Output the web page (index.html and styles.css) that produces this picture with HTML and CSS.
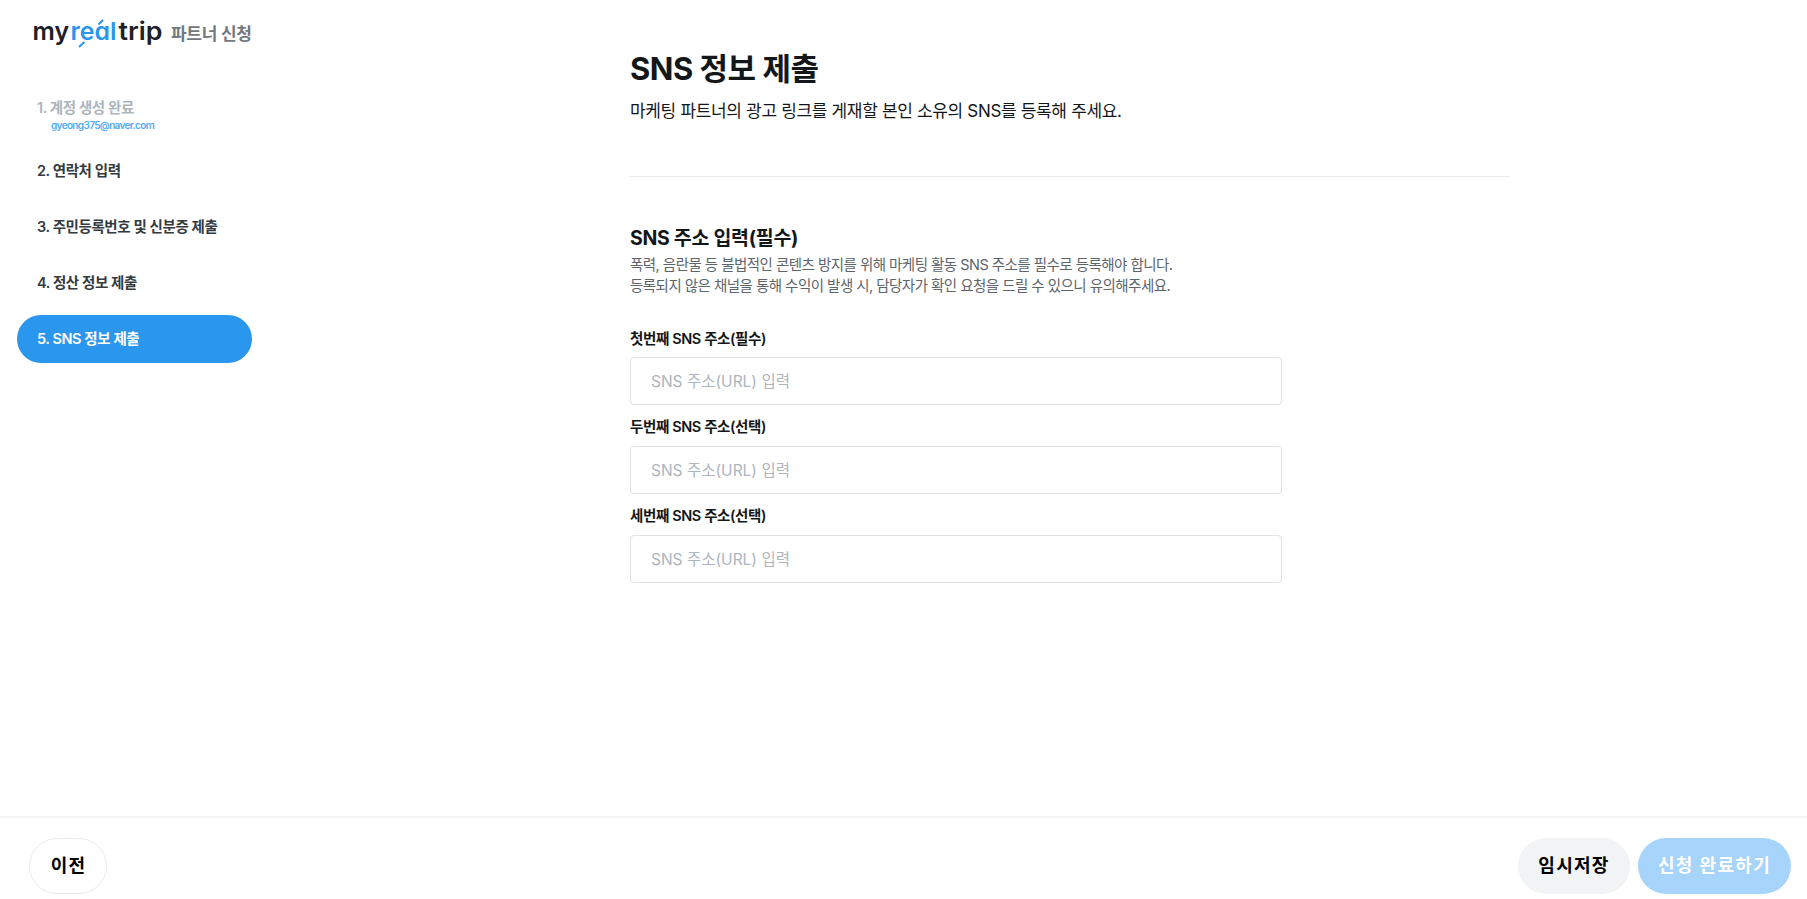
FILE: index.html
```
<!DOCTYPE html>
<html lang="ko">
<head>
  <meta charset="utf-8" />
  <link rel="stylesheet" href="styles.css">
  <title>마이리얼트립 파트너 신청</title>
</head>
<body>
  <div class="page">
    <aside class="sidebar">
      <header class="brand">
        <svg class="logo" width="130" height="34" viewBox="0 0 130 34" role="img" aria-label="myrealtrip">
          <text class="logo-dark" x="-0.5" y="22.5" textLength="36.5" lengthAdjust="spacingAndGlyphs">my</text>
          <text class="logo-blue" x="37.5" y="22.5" textLength="46" lengthAdjust="spacingAndGlyphs">real</text>
          <text class="logo-dark" x="85.5" y="22.5" textLength="44" lengthAdjust="spacingAndGlyphs">trip</text>
          <path class="logo-accent" d="M65.5 7.5 70 3M46 30 51.5 25" />
        </svg>
        <span class="brand-title">파트너 신청</span>
      </header>

      <ul class="steps">
        <li class="step done">1. 계정 생성 완료
          <span class="email">gyeong375@naver.com</span>
        </li>
        <li class="step">2. 연락처 입력</li>
        <li class="step">3. 주민등록번호 및 신분증 제출</li>
        <li class="step">4. 정산 정보 제출</li>
        <li class="step active">5. SNS 정보 제출</li>
      </ul>
    </aside>

    <main class="content">
      <h1>SNS 정보 제출</h1>
      <p class="lead">마케팅 파트너의 광고 링크를 게재할 본인 소유의 SNS를 등록해 주세요.</p>

      <section class="sns">
        <h2>SNS 주소 입력(필수)</h2>
        <p class="description">폭력, 음란물 등 불법적인 콘텐츠 방지를 위해 마케팅 활동 SNS 주소를 필수로 등록해야 합니다.<br>등록되지 않은 채널을 통해 수익이 발생 시, 담당자가 확인 요청을 드릴 수 있으니 유의해주세요.</p>

        <form class="fields">
          <label for="sns1">첫번째 SNS 주소(필수)</label>
          <input type="text" id="sns1" placeholder="SNS 주소(URL) 입력">
          <label for="sns2">두번째 SNS 주소(선택)</label>
          <input type="text" id="sns2" placeholder="SNS 주소(URL) 입력">
          <label for="sns3">세번째 SNS 주소(선택)</label>
          <input type="text" id="sns3" placeholder="SNS 주소(URL) 입력">
        </form>
      </section>
    </main>
  </div>

  <footer class="actions">
    <button type="button" class="btn-prev">이전</button>
    <button type="button" class="btn-save">임시저장</button>
    <button type="button" class="btn-submit" disabled>신청 완료하기</button>
  </footer>
</body>
</html>
```
FILE: styles.css
```
* {
  box-sizing: border-box;
}
body {
  margin: 0;
  height: 100vh;
  display: flex;
  flex-direction: column;
  overflow: hidden;
  background: #fff;
  color: #141719;
  font-family: Inter, "Noto Sans CJK KR", sans-serif;
}
h1, h2, p, ul {
  margin: 0;
  padding: 0;
}
.page {
  flex: 1;
  display: flex;
}
.sidebar {
  width: 252px;
  padding-left: 17px;
}
.brand {
  display: flex;
  align-items: center;
  height: 83px;
  padding: 0 0 15px 16px;
}
.logo {
  flex: none;
  overflow: visible;
}
.logo text {
  font-family: Inter, sans-serif;
  font-size: 24.5px;
  font-weight: 600;
  font-feature-settings: "cv11";
}
.logo-dark {
  fill: #1d2025;
}
.logo-blue {
  fill: #2b96ed;
}
.logo-accent {
  fill: none;
  stroke: #2b96ed;
  stroke-width: 2;
}
.brand-title {
  margin-left: 8px;
  padding-bottom: 4px;
  color: #717880;
  font-size: 17px;
  font-weight: 600;
  letter-spacing: -0.3px;
  white-space: nowrap;
}
.steps {
  list-style: none;
}
.step {
  height: 48px;
  margin-bottom: 8px;
  padding-left: 20px;
  border-radius: 24px;
  color: #343a40;
  font-size: 14.5px;
  font-weight: 600;
  line-height: 48px;
  letter-spacing: -0.42px;
  white-space: nowrap;
}
.step.done {
  height: 56px;
  padding-top: 15px;
  color: #adb5bd;
  line-height: 20px;
}
.email {
  display: block;
  padding-left: 14px;
  color: #51abf3;
  font-size: 10px;
  font-weight: 600;
  line-height: 15px;
  letter-spacing: -0.65px;
}
.step.active {
  background: #2b96ed;
  color: #fff;
}
.content {
  width: 880px;
  margin-left: 378px;
  padding-top: 45px;
}
h1 {
  font-size: 31px;
  font-weight: 700;
  line-height: 48px;
  letter-spacing: -0.5px;
}
.lead {
  margin-top: 4px;
  font-size: 17px;
  line-height: 28px;
  letter-spacing: -0.33px;
}
.sns {
  margin-top: 51px;
  padding-top: 46px;
  border-top: 1px solid #e9ecef;
}
h2 {
  margin-bottom: 1px;
  font-size: 19.5px;
  font-weight: 700;
  line-height: 30px;
  letter-spacing: -0.3px;
}
.description {
  color: #5c646c;
  font-size: 14.5px;
  line-height: 21px;
  letter-spacing: -0.53px;
}
.fields {
  display: flex;
  flex-direction: column;
  width: 652px;
  margin-top: 31px;
}
.fields label {
  height: 31px;
  font-size: 14.5px;
  font-weight: 600;
  line-height: 24px;
  letter-spacing: -0.38px;
}
.fields label:first-child {
  height: 30px;
}
.fields input {
  height: 48px;
  margin-bottom: 10px;
  padding: 0 20px;
  border: 1px solid #dee2e6;
  border-radius: 4px;
  font-family: inherit;
  font-size: 15.5px;
}
.fields input::placeholder {
  color: #adb5bd;
}
.actions {
  display: flex;
  height: 83px;
  padding: 20px 16px 0 29px;
  border-top: 2px solid #f5f5f5;
}
.actions button {
  height: 56px;
  padding: 0 0 5px;
  border: none;
  border-radius: 28px;
  font-family: inherit;
  font-size: 18px;
  font-weight: 600;
  letter-spacing: 1.3px;
  white-space: nowrap;
}
.actions .btn-prev {
  width: 78px;
  padding: 0 0 4px 1px;
  border: 1px solid #ebebeb;
  background: #fff;
  color: #000;
}
.actions .btn-save {
  width: 112px;
  margin-left: auto;
  background: #f1f3f5;
  color: #000;
}
.actions .btn-submit {
  width: 153px;
  margin-left: 8px;
  background: #a6d4fa;
  color: #fff;
}
```
